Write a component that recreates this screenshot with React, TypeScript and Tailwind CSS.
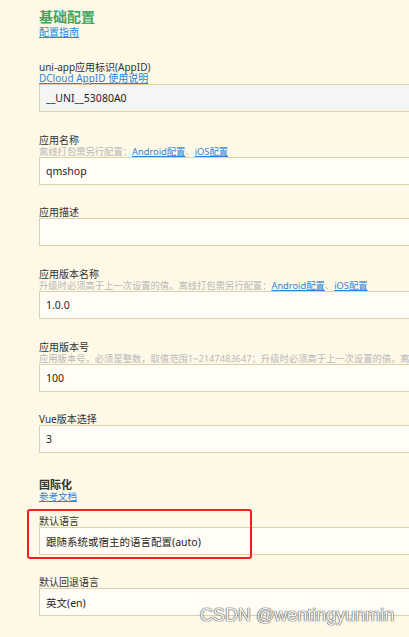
import React from 'react';

const Link: React.FC<{ children: React.ReactNode; className?: string }> = ({ children, className = '' }) => (
    <a className={`text-[#2b85dc] underline underline-offset-1 ${className}`}>{children}</a>
);

interface FieldProps {
    label: string;
    hint?: React.ReactNode;
    value: string;
    disabled?: boolean;
    className?: string;
    children?: React.ReactNode;
}

const Field: React.FC<FieldProps> = ({ label, hint, value, disabled, className = '', children }) => (
    <div className={`relative ${className}`}>
        <div className="text-[10px] leading-[12px] text-[#333]">{label}</div>
        {hint && <div className="text-[9.3px] leading-[11px] text-[#b9b9b9] whitespace-nowrap">{hint}</div>}
        <input
            readOnly
            value={value}
            className={`block w-[390px] h-[28px] border border-[#dbd1ab] pl-[6px] text-[10.5px] text-[#1f1f1f] outline-none font-['Noto_Sans','Noto_Sans_CJK_SC',sans-serif] ${disabled ? 'bg-[#f5f5f3]' : 'bg-[#fffdf6]'}`}
        />
        {children}
    </div>
);

const platformLinks = (
    <>
        <Link>Android配置</Link>、<Link>iOS配置</Link>
    </>
);

export default function App() {
    return (
        <div className="relative min-h-screen h-[637px] w-full overflow-hidden bg-[#fef8e7] font-['Noto_Sans','Noto_Sans_CJK_SC',sans-serif]">
            <div className="pl-[39px] pt-[8px]">
                {/* 基础配置 */}
                <div className="text-[14px] leading-[18px] font-bold text-[#3fa75d]">基础配置</div>
                <div className="text-[10px] leading-[12px]"><Link>配置指南</Link></div>

                <Field
                    className="mt-[23px]"
                    label="uni-app应用标识(AppID)"
                    hint={<span className="text-[10px]"><Link>DCloud AppID 使用说明</Link></span>}
                    value="__UNI__53080A0"
                    disabled
                />
                <Field
                    className="mt-[22px]"
                    label="应用名称"
                    hint={<>离线打包需另行配置：{platformLinks}</>}
                    value="qmshop"
                />
                <Field className="mt-[21px]" label="应用描述" value="" />
                <Field
                    className="mt-[22px]"
                    label="应用版本名称"
                    hint={<>升级时必须高于上一次设置的值。离线打包需另行配置：{platformLinks}</>}
                    value="1.0.0"
                />
                <Field
                    className="mt-[22px]"
                    label="应用版本号"
                    hint="应用版本号，必须是整数，取值范围1~2147483647；升级时必须高于上一次设置的值。离线打包需另行配置：Android配置、iOS配置"
                    value="100"
                />
                <Field className="mt-[21px]" label="Vue版本选择" value="3" />

                {/* 国际化 */}
                <div className="mt-[25px] text-[11px] leading-[13px] font-bold text-[#333]">国际化</div>
                <div className="text-[9.5px] leading-[12px]"><Link>参考文档</Link></div>

                <Field className="mt-[12px]" label="默认语言" value="跟随系统或宿主的语言配置(auto)">
                    <div className="absolute -top-[6px] -left-[12px] w-[225px] h-[50px] border-2 border-[#f41d1d] rounded-[3px] pointer-events-none" />
                </Field>
                <Field className="mt-[21px]" label="默认回退语言" value="英文(en)" />
            </div>

            <div className="absolute left-[200px] top-[606px] text-[18px] leading-[18px] font-['Liberation_Sans',Arial,sans-serif] text-[#f5f5f5] [text-shadow:0_0_1px_#555,0_0_1px_#555,0_0_1px_#555] whitespace-nowrap">
                CSDN @wentingyunmin
            </div>
        </div>
    );
}
